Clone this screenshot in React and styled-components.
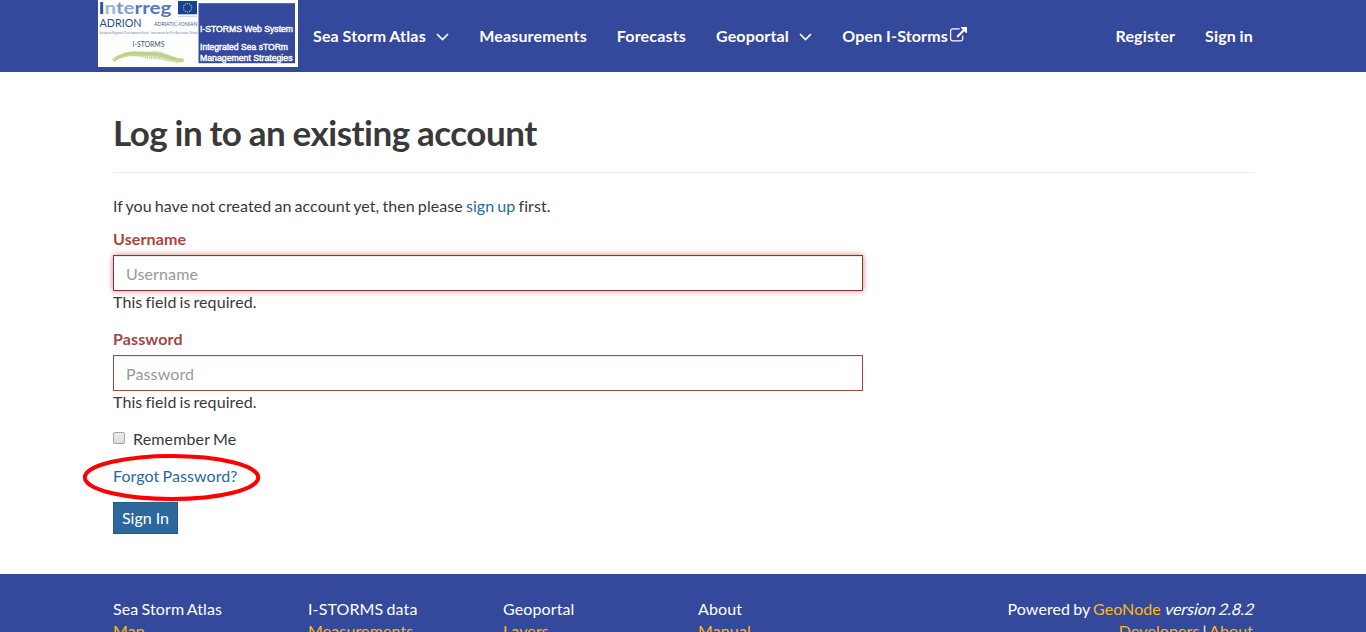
import React from "react";
import styled, { createGlobalStyle } from "styled-components";

const GlobalStyle = createGlobalStyle`
  *, *::before, *::after { box-sizing: border-box; }
  html, body { margin: 0; height: 100%; overflow: hidden; }
  body {
    font-family: Lato, "Liberation Sans", sans-serif;
    font-size: 16px;
    line-height: 22px;
    letter-spacing: 0.08px;
    word-spacing: -1.1px;
    font-variant-ligatures: none;
    color: #393939;
    background: #fff;
  }
`;

const Page = styled.div`
  height: 632px;
  overflow: hidden;
`;

const Container = styled.div`
  width: 1170px;
  margin: 0 auto;
`;

const Navbar = styled.header`
  height: 72px;
  background: #34499b;
`;

const NavInner = styled(Container)`
  display: flex;
  align-items: flex-start;
`;

const Logo = styled.svg`
  display: block;
  flex: none;
  width: 200px;
  height: 67px;
  letter-spacing: 0;
  word-spacing: 0;
`;

const NavList = styled.nav`
  display: flex;
  margin-left: ${(p) => (p.$right ? "auto" : 0)};
`;

const NavLink = styled.a`
  display: flex;
  align-items: center;
  height: 72px;
  padding: 0 15px;
  color: #fff;
  font-weight: 700;
  letter-spacing: 0.16px;
  word-spacing: -0.4px;
  white-space: nowrap;
`;

const Chevron = styled.svg`
  width: 13px;
  height: 8px;
  margin: 2px 0 0 10.4px;
`;

const ExternalIcon = styled.svg`
  width: 17px;
  height: 17px;
  margin: -1px 0 0 2px;
`;

const Main = styled(Container)`
  height: 502px;
  padding: 40px 15px 0;
`;

const Title = styled.h2`
  margin: 0;
  height: 61px;
  border-bottom: 1px solid #eee;
  font-size: 35px;
  font-weight: 700;
  line-height: 40px;
  letter-spacing: -0.5px;
  word-spacing: -0.7px;
`;

const Intro = styled.p`
  margin: 22px 0 11px;
`;

const Link = styled.a`
  color: #2c689c;
`;

const Form = styled.form`
  width: 750px;
`;

const Field = styled.div`
  height: 100px;
`;

const Label = styled.label`
  display: block;
  margin-bottom: 5px;
  font-weight: 700;
  letter-spacing: 0.13px;
  color: #a94442;
`;

const Input = styled.input`
  display: block;
  width: 100%;
  height: 36px;
  padding: 6px 12px;
  border: 1px solid ${(p) => (p.$focused ? "#843534" : "#a94442")};
  border-radius: 0;
  outline: 0;
  background: #fff;
  font: inherit;
  letter-spacing: 0.12px;
  box-shadow: inset 0 1px 1px rgba(0, 0, 0, 0.075)
    ${(p) => (p.$focused ? ", 0 0 6px #ce8483" : "")};
  &::placeholder { color: #999; opacity: 1; }
`;

const Help = styled.div``;

const Remember = styled.label`
  display: flex;
  align-items: center;
  gap: 8px;
  letter-spacing: 0.15px;
`;

const Checkbox = styled.input`
  appearance: none;
  width: 12px;
  height: 12px;
  margin: 0 0 3px;
  border: 1px solid #a4a4a4;
  border-radius: 2px;
  background: linear-gradient(#ededed, #dcdcdc);
`;

const Forgot = styled.div`
  position: relative;
  width: max-content;
  margin: 15px 0;
`;

const Ring = styled.svg`
  position: absolute;
  left: -31px;
  top: -12px;
  width: 179px;
  height: 49px;
  pointer-events: none;
`;

const Button = styled.button`
  display: block;
  width: 65px;
  height: 32px;
  padding: 0;
  border: 1px solid #265a87;
  background: #2c689c;
  color: #fff;
  font: inherit;
`;

const Footer = styled.footer`
  height: 58px;
  overflow: hidden;
  background: #34499b;
  color: #fff;
`;

const FooterInner = styled(Container)`
  display: flex;
  padding: 24px 15px 0;
`;

const FooterColumn = styled.div`
  width: 195px;
  letter-spacing: 0.12px;
`;

const FooterRight = styled.div`
  margin-left: auto;
  text-align: right;
`;

const FooterLink = styled.a`
  color: #fdb813;
`;

const Version = styled.span`
  display: inline-block;
  letter-spacing: -0.03px;
  transform: skewX(-14deg);
  transform-origin: 0 75%;
`;

const columns = [
  ["Sea Storm Atlas", "Map"],
  ["I-STORMS data", "Measurements"],
  ["Geoportal", "Layers"],
  ["About", "Manual"],
];

const stars = Array.from({ length: 12 }, (_, i) => {
  const angle = (i * Math.PI) / 6;
  return [89.5 + 4.2 * Math.cos(angle), 7.8 + 4.2 * Math.sin(angle)];
});

function SiteLogo() {
  return (
    <Logo viewBox="0 0 200 67" role="img" aria-label="I-STORMS">
      <rect width="200" height="67" fill="#fff" />
      <g fontFamily="Lato, sans-serif">
        <text x="0.5" y="14" fontSize="17" fontWeight="700" textLength="73" lengthAdjust="spacingAndGlyphs" fill="#5b78bd">
          <tspan fill="#274b9f">I</tspan>
          <tspan fill="#9db4df">n</tspan>
          <tspan fill="#7c98cf">t</tspan>
          <tspan fill="#8aa3d6">e</tspan>
          <tspan fill="#5576bb">rreg</tspan>
        </text>
        <text x="1.5" y="26.5" fontSize="11" textLength="42" lengthAdjust="spacingAndGlyphs" fill="#2c4a8c">ADRION</text>
        <text x="56" y="26.3" fontSize="4.8" textLength="43.5" lengthAdjust="spacingAndGlyphs" fill="#435b98">ADRIATIC-IONIAN</text>
        <text x="1.5" y="33.5" fontSize="3" textLength="98" lengthAdjust="spacingAndGlyphs" fill="#6c82b5">European Regional Development Fund - Instrument for Pre-Accession II Fund</text>
        <text x="34.5" y="46.5" fontSize="7.5" textLength="32" lengthAdjust="spacingAndGlyphs" fill="#384f74">I-STORMS</text>
      </g>
      <rect x="80" y="1" width="19" height="13.3" fill="#164194" />
      {stars.map(([x, y], i) => (
        <circle key={i} cx={x} cy={y} r="0.65" fill="#d7d08a" />
      ))}
      <path d="M80 16.3h19" stroke="#b5c1df" strokeWidth="0.8" />
      <g fill="none">
        <path d="M15 60.5C26 52 38 55 49 54S70 59 86 60.5" stroke="#cbdba2" strokeWidth="3.5" />
        <path d="M18 58.5C30 50 42 55 53 53S71 58 84 61" stroke="#b3cb76" strokeWidth="3" strokeDasharray="1 0.6" />
        <path d="M24 56C34 51 45 57 55 57S72 61 82 61" stroke="#c5d797" strokeWidth="4" strokeDasharray="1.4 0.7" />
        <path d="M27 54C38 51 45 53 55 54S72 58 78 60" stroke="#b7cd80" strokeWidth="3" strokeDasharray="0.8 0.9" />
      </g>
      <rect x="100.5" y="3.2" width="96.5" height="60" fill="#34499b" />
      <g fontFamily="'Liberation Sans', Arial, sans-serif" fontSize="9.8" fill="#fff" stroke="#fff" strokeWidth="0.45">
        <text x="102" y="32" textLength="93" lengthAdjust="spacingAndGlyphs">I-STORMS Web System</text>
        <text x="102" y="49.5" textLength="88" lengthAdjust="spacingAndGlyphs">Integrated Sea sTORm</text>
        <text x="102" y="60.5" textLength="92.5" lengthAdjust="spacingAndGlyphs">Management Strategies</text>
      </g>
    </Logo>
  );
}

function DownIcon() {
  return (
    <Chevron viewBox="0 0 13 8" aria-hidden="true">
      <path d="M1 1l5.5 5.6L12 1" fill="none" stroke="#fff" strokeWidth="1.7" />
    </Chevron>
  );
}

function OpenIcon() {
  return (
    <ExternalIcon viewBox="0 0 1792 1792" fill="#fff" aria-hidden="true">
      <path d="M1408 928v320q0 119-84.5 203.5t-203.5 84.5h-832q-119 0-203.5-84.5t-84.5-203.5v-832q0-119 84.5-203.5t203.5-84.5h704q14 0 23 9t9 23v64q0 14-9 23t-23 9h-704q-66 0-113 47t-47 113v832q0 66 47 113t113 47h832q66 0 113-47t47-113v-320q0-14 9-23t23-9h64q14 0 23 9t9 23zm384-864v512q0 26-19 45t-45 19-45-19l-176-176-652 652q-10 10-23 10t-23-10l-114-114q-10-10-10-23t10-23l652-652-176-176q-19-19-19-45t19-45 45-19h512q26 0 45 19t19 45z" />
    </ExternalIcon>
  );
}

export default function App() {
  return (
    <Page>
      <GlobalStyle />
      <Navbar>
        <NavInner>
          <SiteLogo />
          <NavList>
            <NavLink>Sea Storm Atlas<DownIcon /></NavLink>
            <NavLink>Measurements</NavLink>
            <NavLink>Forecasts</NavLink>
            <NavLink>Geoportal<DownIcon /></NavLink>
            <NavLink>Open I-Storms<OpenIcon /></NavLink>
          </NavList>
          <NavList $right>
            <NavLink>Register</NavLink>
            <NavLink>Sign in</NavLink>
          </NavList>
        </NavInner>
      </Navbar>
      <Main as="main">
        <Title>Log in to an existing account</Title>
        <Intro>
          If you have not created an account yet, then please <Link>sign up</Link> first.
        </Intro>
        <Form>
          <Field>
            <Label htmlFor="username">Username</Label>
            <Input id="username" placeholder="Username" $focused />
            <Help>This field is required.</Help>
          </Field>
          <Field>
            <Label htmlFor="password">Password</Label>
            <Input id="password" type="password" placeholder="Password" />
            <Help>This field is required.</Help>
          </Field>
          <Remember>
            <Checkbox type="checkbox" />
            Remember Me
          </Remember>
          <Forgot>
            <Link>Forgot Password?</Link>
            <Ring viewBox="0 0 179 49" aria-hidden="true">
              <ellipse cx="89.5" cy="24.5" rx="86.7" ry="21.5" fill="none" stroke="#f00" strokeWidth="4" />
            </Ring>
          </Forgot>
          <Button type="button">Sign In</Button>
        </Form>
      </Main>
      <Footer>
        <FooterInner>
          {columns.map(([heading, link]) => (
            <FooterColumn key={heading}>
              <div>{heading}</div>
              <FooterLink>{link}</FooterLink>
            </FooterColumn>
          ))}
          <FooterRight>
            <div>
              Powered by <FooterLink>GeoNode</FooterLink> <Version>version 2.8.2</Version>
            </div>
            <div>
              <FooterLink>Developers</FooterLink> | <FooterLink>About</FooterLink>
            </div>
          </FooterRight>
        </FooterInner>
      </Footer>
    </Page>
  );
}
